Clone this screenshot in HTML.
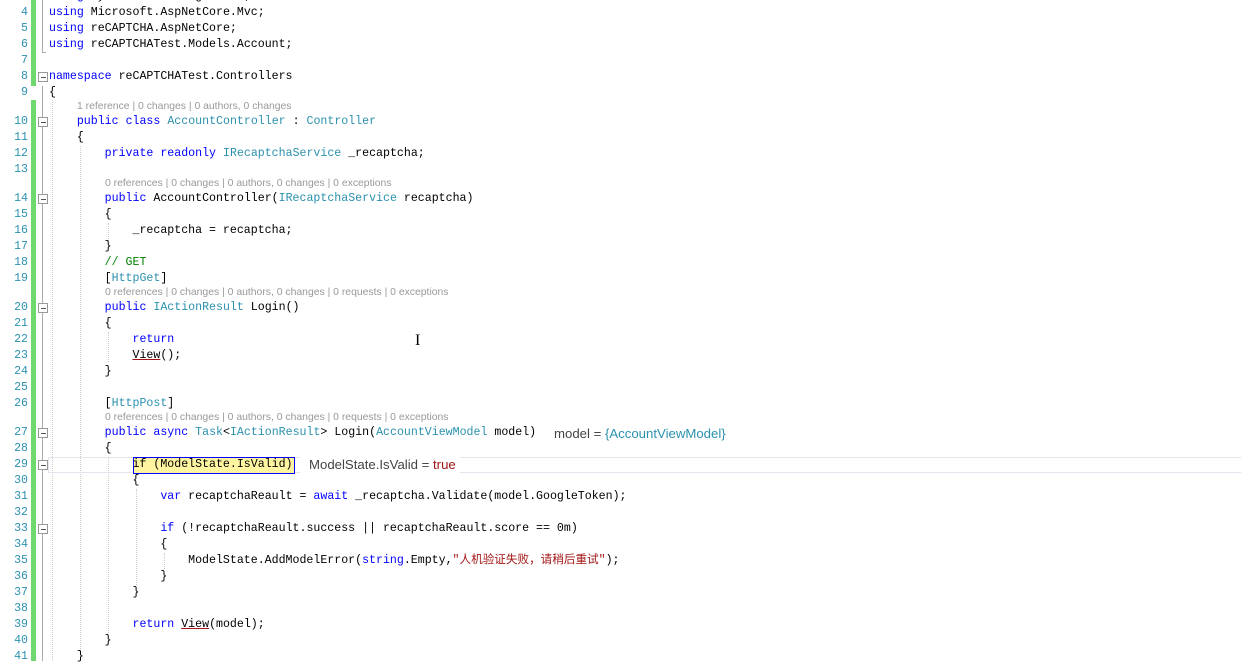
<!DOCTYPE html>
<html><head><meta charset="utf-8"><style>
body{margin:0;width:1241px;height:661px;background:#fff;overflow:hidden;position:relative;font-family:"Liberation Mono",monospace;font-size:11.6px;color:#000}
.r{position:absolute;left:0;height:16px;line-height:16px;white-space:pre;width:1241px}
.n{position:absolute;left:0;width:28px;text-align:right;color:#2b91af}
.c{position:absolute;left:49px}
.l{position:absolute;height:14px;line-height:14px;font-family:"Liberation Sans",sans-serif;font-size:10.4px;color:#999;white-space:pre}
.k{color:#0000ff}.t{color:#2b91af}.s{color:#a31515;font-family:"Liberation Mono","Noto Sans CJK SC",monospace}.g{color:#008000}
.box{position:absolute;left:38px;width:8px;height:8px;border:1px solid #999;background:#fff}
.box:after{content:"";position:absolute;left:2px;top:4px;width:5px;height:1px;background:#555}
.bar{position:absolute;left:31px;width:5px;background:#6fd96f}
.gd{position:absolute;width:0;border-left:1px dotted #ccc}
.u{text-decoration:underline;text-decoration-color:#a31515}
</style></head><body>
<div class="bar" style="top:0;height:86px"></div>
<div class="bar" style="top:100px;height:561px"></div>
<div style="position:absolute;left:42px;top:0;height:52px;border-left:1px solid #aaa"></div>
<div style="position:absolute;left:42px;top:52px;width:4px;border-top:1px solid #aaa"></div>
<div style="position:absolute;left:42px;top:86px;height:575px;border-left:1px solid #aaa"></div>
<div class="gd" style="left:52px;top:100px;height:561px"></div>
<div class="gd" style="left:80px;top:146px;height:505px"></div>
<div class="gd" style="left:108px;top:223px;height:18px"></div>
<div class="gd" style="left:108px;top:332px;height:30px"></div>
<div class="gd" style="left:108px;top:457px;height:176px"></div>
<div class="gd" style="left:136px;top:489px;height:96px"></div>
<div class="gd" style="left:164px;top:553px;height:16px"></div>
<div style="position:absolute;left:48px;top:457px;width:1193px;height:14px;border:1px solid #e4e4ec;border-right:none"></div>

<div class="r" style="top:-11px"><span class="n">3</span><span class="c"><span class="k">using</span> System.Threading.Tasks;</span></div>
<div class="r" style="top:5px"><span class="n">4</span><span class="c"><span class="k">using</span> Microsoft.AspNetCore.Mvc;</span></div>
<div class="r" style="top:21px"><span class="n">5</span><span class="c"><span class="k">using</span> reCAPTCHA.AspNetCore;</span></div>
<div class="r" style="top:37px"><span class="n">6</span><span class="c"><span class="k">using</span> reCAPTCHATest.Models.Account;</span></div>
<div class="r" style="top:53px"><span class="n">7</span></div>
<div class="r" style="top:69px"><span class="n">8</span><span class="c"><span class="k">namespace</span> reCAPTCHATest.Controllers</span></div>
<div class="box" style="top:72px"></div>
<div class="r" style="top:85px"><span class="n">9</span><span class="c">{</span></div>
<div class="l" style="left:77px;top:100px">1 reference | 0 changes | 0 authors, 0 changes</div>
<div class="r" style="top:114px"><span class="n">10</span><span class="c">    <span class="k">public</span> <span class="k">class</span> <span class="t">AccountController</span> : <span class="t">Controller</span></span></div>
<div class="box" style="top:117px"></div>
<div class="r" style="top:130px"><span class="n">11</span><span class="c">    {</span></div>
<div class="r" style="top:146px"><span class="n">12</span><span class="c">        <span class="k">private</span> <span class="k">readonly</span> <span class="t">IRecaptchaService</span> _recaptcha;</span></div>
<div class="r" style="top:162px"><span class="n">13</span></div>
<div class="l" style="left:105px;top:177px">0 references | 0 changes | 0 authors, 0 changes | 0 exceptions</div>
<div class="r" style="top:191px"><span class="n">14</span><span class="c">        <span class="k">public</span> AccountController(<span class="t">IRecaptchaService</span> recaptcha)</span></div>
<div class="box" style="top:194px"></div>
<div class="r" style="top:207px"><span class="n">15</span><span class="c">        {</span></div>
<div class="r" style="top:223px"><span class="n">16</span><span class="c">            _recaptcha = recaptcha;</span></div>
<div class="r" style="top:239px"><span class="n">17</span><span class="c">        }</span></div>
<div class="r" style="top:255px"><span class="n">18</span><span class="c">        <span class="g">// GET</span></span></div>
<div class="r" style="top:271px"><span class="n">19</span><span class="c">        [<span class="t">HttpGet</span>]</span></div>
<div class="l" style="left:105px;top:286px">0 references | 0 changes | 0 authors, 0 changes | 0 requests | 0 exceptions</div>
<div class="r" style="top:300px"><span class="n">20</span><span class="c">        <span class="k">public</span> <span class="t">IActionResult</span> Login()</span></div>
<div class="box" style="top:303px"></div>
<div class="r" style="top:316px"><span class="n">21</span><span class="c">        {</span></div>
<div class="r" style="top:332px"><span class="n">22</span><span class="c">            <span class="k">return</span></span></div>
<div class="r" style="top:348px"><span class="n">23</span><span class="c">            <span class="u">View</span>();</span></div>
<div class="r" style="top:364px"><span class="n">24</span><span class="c">        }</span></div>
<div class="r" style="top:380px"><span class="n">25</span></div>
<div class="r" style="top:396px"><span class="n">26</span><span class="c">        [<span class="t">HttpPost</span>]</span></div>
<div class="l" style="left:105px;top:411px">0 references | 0 changes | 0 authors, 0 changes | 0 requests | 0 exceptions</div>
<div class="r" style="top:425px"><span class="n">27</span><span class="c">        <span class="k">public</span> <span class="k">async</span> <span class="t">Task</span>&lt;<span class="t">IActionResult</span>&gt; Login(<span class="t">AccountViewModel</span> model)</span></div>
<div class="l" style="left:554px;top:426px;font-size:13.2px;height:16px;line-height:16px;color:#444">model = <span style="color:#2b91af">{AccountViewModel}</span></div>
<div class="box" style="top:428px"></div>
<div class="r" style="top:441px"><span class="n">28</span><span class="c">        {</span></div>
<div style="position:absolute;left:133px;top:457px;width:160px;height:15px;background:#fff5a0;border:1px solid #0000ff"></div>
<div class="r" style="top:457px"><span class="n">29</span><span class="c">            if (ModelState.IsValid)</span></div>
<div style="position:absolute;left:300px;top:457px;width:160px;height:16px;background:#fff"></div>
<div class="l" style="left:309px;top:457px;font-size:13.2px;height:16px;line-height:16px;color:#444">ModelState.IsValid = <span style="color:#a31515">true</span></div>
<div class="box" style="top:460px"></div>
<div class="r" style="top:473px"><span class="n">30</span><span class="c">            {</span></div>
<div class="r" style="top:489px"><span class="n">31</span><span class="c">                <span class="k">var</span> recaptchaReault = <span class="k">await</span> _recaptcha.Validate(model.GoogleToken);</span></div>
<div class="r" style="top:505px"><span class="n">32</span></div>
<div class="r" style="top:521px"><span class="n">33</span><span class="c">                <span class="k">if</span> (!recaptchaReault.success || recaptchaReault.score == 0m)</span></div>
<div class="box" style="top:524px"></div>
<div class="r" style="top:537px"><span class="n">34</span><span class="c">                {</span></div>
<div class="r" style="top:553px"><span class="n">35</span><span class="c">                    ModelState.AddModelError(<span class="k">string</span>.Empty,<span class="s">"人机验证失败，请稍后重试"</span>);</span></div>
<div class="r" style="top:569px"><span class="n">36</span><span class="c">                }</span></div>
<div class="r" style="top:585px"><span class="n">37</span><span class="c">            }</span></div>
<div class="r" style="top:601px"><span class="n">38</span></div>
<div class="r" style="top:617px"><span class="n">39</span><span class="c">            <span class="k">return</span> <span class="u">View</span>(model);</span></div>
<div class="r" style="top:633px"><span class="n">40</span><span class="c">        }</span></div>
<div class="r" style="top:649px"><span class="n">41</span><span class="c">    }</span></div>
<div style="position:absolute;left:415px;top:333px;font-family:'Liberation Serif',serif;font-size:16px;line-height:16px">I</div>
</body></html>
